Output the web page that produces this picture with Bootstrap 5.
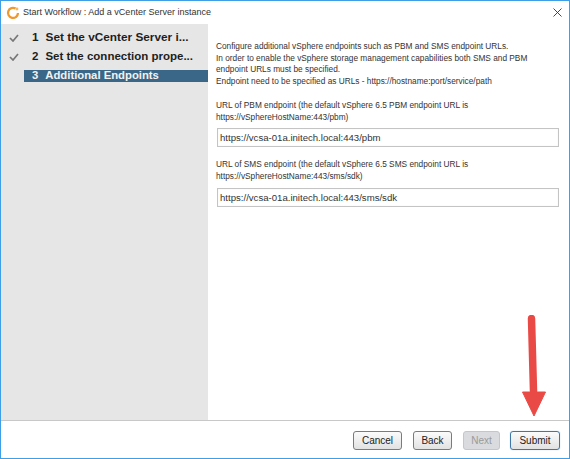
<!DOCTYPE html>
<html lang="en"><head><meta charset="utf-8">
<link href="https://cdn.jsdelivr.net/npm/bootstrap@5.3.0/dist/css/bootstrap.min.css" rel="stylesheet">
<style>
html,body{margin:0;height:459px;overflow:hidden;background:#fff;font-family:"Liberation Sans",Arial,sans-serif}
.wiz-window{width:570px;height:459px;border:1px solid #3f9fe6;background:#fff;position:relative;color:#222}
.wiz-title{height:23px;padding-left:5px;font-size:9px;color:#333}
.wiz-title svg:first-child{margin-right:3px}
.wiz-x{margin-right:7px}
.wiz-body{height:396px}
.wiz-side{width:207px;background:#e6e6e6;padding-top:4px;flex:none}
.wiz-step{height:19px;font-size:11.8px;font-weight:700;color:#1e1e1e;white-space:nowrap}
.wiz-step2{font-size:11.5px}
.wiz-check{width:23px;padding-left:8px;flex:none;line-height:0}
.wiz-stepname{flex:1;padding-left:8px}
.wiz-step.wiz-on{font-size:11.3px}
.wiz-step.wiz-on .wiz-stepname{background:#3a6788;color:#f2f2f2;height:12px;line-height:11px}
.wiz-num{margin-right:7px}
.wiz-main{flex:1;padding:17px 10px 0 8px;font-size:8.3px;line-height:11.7px;color:#333}
.wiz-main p{margin:0}
.wiz-para{margin-bottom:12px!important}
.wiz-input{display:block;width:342px;height:19px;border:1px solid #c4c4c4;border-radius:0;box-shadow:inset 0 0 1px #ddd;padding:0 2px;font-size:9.6px;color:#333;font-family:inherit;margin:5px 0 12px 1px;line-height:17px;outline:0}
.wiz-foot{height:38px;border-top:1px solid #c8c8c8;padding:10px 9px 0 0}
.wiz-btn{height:19px;font-size:10px;line-height:17px;padding:0;color:#222;border:1px solid #7b7b7b;border-radius:3px;background:linear-gradient(#fbfbfb,#e2e2e2);text-align:center}
.wiz-c{width:49px;margin-right:11px}.wiz-b{width:39px;margin-right:11px}
.wiz-n{width:37px;margin-right:10px;background:#d9dbde;border-color:#c4c6c9;color:#9a9a9a}
.wiz-s{width:50px;border-color:#3f78a8;box-shadow:0 0 1px #7fb2da}
.wiz-arrow{position:absolute;left:518px;top:314px}
</style></head>
<body>
<div class="wiz-window">
 <div class="wiz-title d-flex align-items-center">
  <svg width="14" height="14" viewBox="0 0 14 14"><path d="M9.600 2.600A5 5 0 1 0 12 7" fill="none" stroke="#f0982a" stroke-width="2.300"/><circle cx="11" cy="3" r="1.400" fill="#f7b55c"/></svg>
  <span class="flex-grow-1">Start Workflow : Add a vCenter Server instance</span>
  <svg class="wiz-x" width="9" height="9" viewBox="0 0 9 9"><path d="M.5.5l8 8M8.500.5l-8 8" stroke="#333" stroke-width=".9"/></svg>
 </div>
 <div class="wiz-body d-flex">
  <div class="wiz-side">
   <div class="wiz-step d-flex align-items-center"><span class="wiz-check"><svg width="10" height="8" viewBox="0 0 10 8"><path d="M1 4l3 3 5-6" fill="none" stroke="#777" stroke-width="1.700"/></svg></span><span class="wiz-stepname"><span class="wiz-num">1</span>Set the vCenter Server i...</span></div>
   <div class="wiz-step wiz-step2 d-flex align-items-center"><span class="wiz-check"><svg width="10" height="8" viewBox="0 0 10 8"><path d="M1 4l3 3 5-6" fill="none" stroke="#777" stroke-width="1.700"/></svg></span><span class="wiz-stepname"><span class="wiz-num">2</span>Set the connection prope...</span></div>
   <div class="wiz-step wiz-on d-flex align-items-center"><span class="wiz-check"></span><span class="wiz-stepname"><span class="wiz-num">3</span>Additional Endpoints</span></div>
  </div>
  <div class="wiz-main">
   <p class="wiz-para">Configure additional vSphere endpoints such as PBM and SMS endpoint URLs.<br>In order to enable the vSphere storage management capabilities both SMS and PBM<br>endpoint URLs must be specified.<br>Endpoint need to be specified as URLs - https://hostname:port/service/path</p>
   <p>URL of PBM endpoint (the default vSphere 6.5 PBM endpoint URL is<br>https://vSphereHostName:443/pbm)</p>
   <input class="wiz-input" value="https://vcsa-01a.initech.local:443/pbm">
   <p>URL of SMS endpoint (the default vSphere 6.5 SMS endpoint URL is<br>https://vSphereHostName:443/sms/sdk)</p>
   <input class="wiz-input" value="https://vcsa-01a.initech.local:443/sms/sdk">
  </div>
 </div>
 <div class="wiz-foot d-flex justify-content-end">
  <button class="wiz-btn wiz-c">Cancel</button><button class="wiz-btn wiz-b">Back</button><button class="wiz-btn wiz-n" disabled>Next</button><button class="wiz-btn wiz-s">Submit</button>
 </div>
 <svg class="wiz-arrow" width="30" height="104" viewBox="0 0 30 104"><path d="M12.500 3.500L14.500 76" stroke="#ea4a45" stroke-width="7.500" stroke-linecap="round" fill="none"/><path d="M3.500 77L26.500 77L15 101Z" fill="#ea4a45" stroke="#ea4a45" stroke-linejoin="round"/></svg>
</div>
</body></html>
